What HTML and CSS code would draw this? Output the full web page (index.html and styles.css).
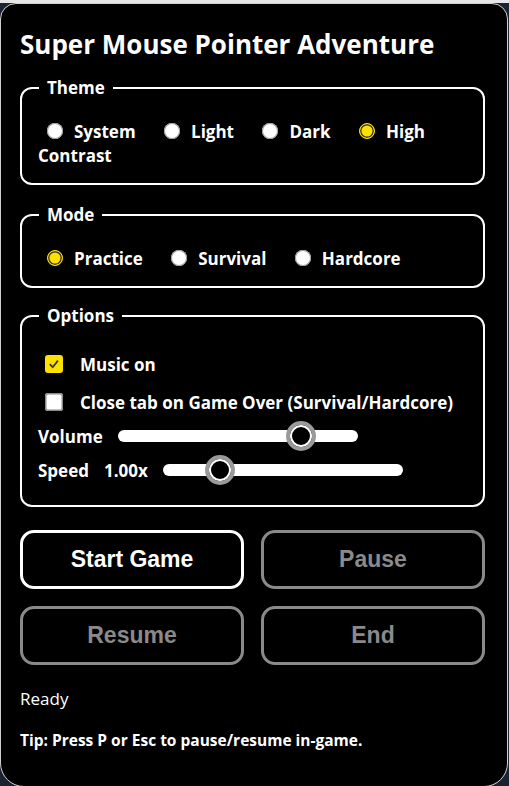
FILE: index.html
```html
<!DOCTYPE html>
<html lang="en">
<head>
  <meta charset="UTF-8" />
  <title>Super Mouse Pointer Adventure</title>
  <link rel="stylesheet" href="styles.css">
</head>
<body>
  <div class="popup">
    <h1>Super Mouse Pointer Adventure</h1>

    <fieldset class="group theme">
      <legend>Theme</legend>
      <div class="choices">
        <label><input type="radio" name="theme" value="system">System</label>
        <label><input type="radio" name="theme" value="light">Light</label>
        <label><input type="radio" name="theme" value="dark">Dark</label>
        <label><input type="radio" name="theme" value="hc" checked>High Contrast</label>
      </div>
    </fieldset>

    <fieldset class="group mode">
      <legend>Mode</legend>
      <div class="choices">
        <label><input type="radio" name="mode" value="practice" checked>Practice</label>
        <label><input type="radio" name="mode" value="survival">Survival</label>
        <label><input type="radio" name="mode" value="hardcore">Hardcore</label>
      </div>
    </fieldset>

    <fieldset class="group options">
      <legend>Options</legend>
      <label class="check"><input type="checkbox" checked>Music on</label>
      <label class="check"><input type="checkbox">Close tab on Game Over (Survival/Hardcore)</label>
      <div class="slider-row first">
        <span>Volume</span>
        <input type="range" min="0" max="1" step="0.01" value="0.8">
      </div>
      <div class="slider-row">
        <span>Speed</span>
        <span>1.00x</span>
        <input type="range" min="0.5" max="3" step="0.05" value="1">
      </div>
    </fieldset>

    <div class="buttons">
      <button class="primary">Start Game</button>
      <button disabled>Pause</button>
      <button disabled>Resume</button>
      <button disabled>End</button>
    </div>

    <p class="status">Ready</p>
    <p class="tip">Tip: Press P or Esc to pause/resume in-game.</p>
  </div>
</body>
</html>
```

FILE: styles.css
```css
html {
  background: #1b2333;
}
body {
  margin: 0;
  padding-top: 3px;
  background: linear-gradient(#e6e6e6 0 3px, #1b2333 3px);
  font-family: 'Open Sans', sans-serif;
  color: white;
}
.popup {
  background: #000;
  width: 508px;
  height: 784px;
  box-sizing: border-box;
  border: 1px solid #d0d0d0;
  border-radius: 16px 16px 24px 24px;
  padding: 23px 22px 0 19px;
}
h1 {
  margin: 0 0 14px 0;
  font-size: 26px;
  line-height: 35px;
  font-weight: 700;
}
.group {
  border: 2px solid white;
  border-radius: 12px;
  margin: 0 0 18px 0;
  padding: 21px 14px 15px 16px;
}
.mode {
  margin-bottom: 16px;
}
legend {
  font-weight: 700;
  font-size: 17px;
  line-height: 23px;
  padding: 0 8px;
  margin-left: 1px;
}
.choices {
  font-size: 17px;
  font-weight: 700;
  line-height: 24px;
}
.choices label {
  margin-right: 15px;
}
input[type=radio] {
  appearance: none;
  width: 16px;
  height: 16px;
  margin: 0 11px 0 9px;
  border-radius: 50%;
  background: white;
  box-shadow: inset 0 0 0 1px #9a9a9a;
  vertical-align: -1px;
}
input[type=radio]:checked {
  background: #ffe100;
  border: 1.5px solid #ffe100;
  box-shadow: inset 0 0 0 1.5px #3a3a3a;
}
.options {
  padding: 18px 14px 18px 16px;
  font-size: 17px;
  font-weight: 700;
}
.check {
  display: flex;
  align-items: center;
  height: 38px;
}
input[type=checkbox] {
  appearance: none;
  width: 18px;
  height: 18px;
  margin: 0 17px 0 7px;
  border-radius: 3px;
  background: white;
  box-shadow: inset 0 0 0 1.5px #8a8a8a;
}
input[type=checkbox]:checked {
  background: #ffe100 url("data:image/svg+xml,%3Csvg xmlns='http://www.w3.org/2000/svg' viewBox='0 0 18 18'%3E%3Cpath d='M4.8 9.2l2.9 3 5.2-6.6' fill='none' stroke='%23333' stroke-width='1.7'/%3E%3C/svg%3E") center/18px no-repeat;
  box-shadow: none;
}
.slider-row {
  display: flex;
  align-items: center;
  height: 34px;
  gap: 15px;
}
.slider-row.first {
  margin-top: -2px;
}
input[type=range] {
  appearance: none;
  width: 240px;
  height: 30px;
  margin: 0;
  background: transparent;
}
input[type=range]::-webkit-slider-runnable-track {
  height: 12px;
  border-radius: 6px;
  background: white;
}
input[type=range]::-webkit-slider-thumb {
  appearance: none;
  width: 30px;
  height: 30px;
  margin-top: -9px;
  border-radius: 50%;
  background: #000;
  border: 4.5px solid #9a9a9a;
  box-shadow: inset 0 0 0 2px white;
  box-sizing: border-box;
}
.buttons {
  display: grid;
  grid-template-columns: 1fr 1fr;
  column-gap: 17px;
  row-gap: 17px;
  margin-top: 23px;
}
button {
  height: 59px;
  background: #000;
  color: white;
  border: 3px solid white;
  border-radius: 14px;
  font-family: 'Liberation Sans', Arial, sans-serif;
  font-weight: 700;
  font-size: 23px;
  cursor: pointer;
}
button:disabled {
  color: #8a8a8a;
  border-color: #8a8a8a;
  cursor: default;
}
.status {
  margin: 22px 0 0 0;
  font-size: 17px;
  line-height: 24px;
}
.tip {
  margin: 18px 0 0 0;
  font-size: 15.5px;
  line-height: 22px;
  font-weight: 700;
}
```
